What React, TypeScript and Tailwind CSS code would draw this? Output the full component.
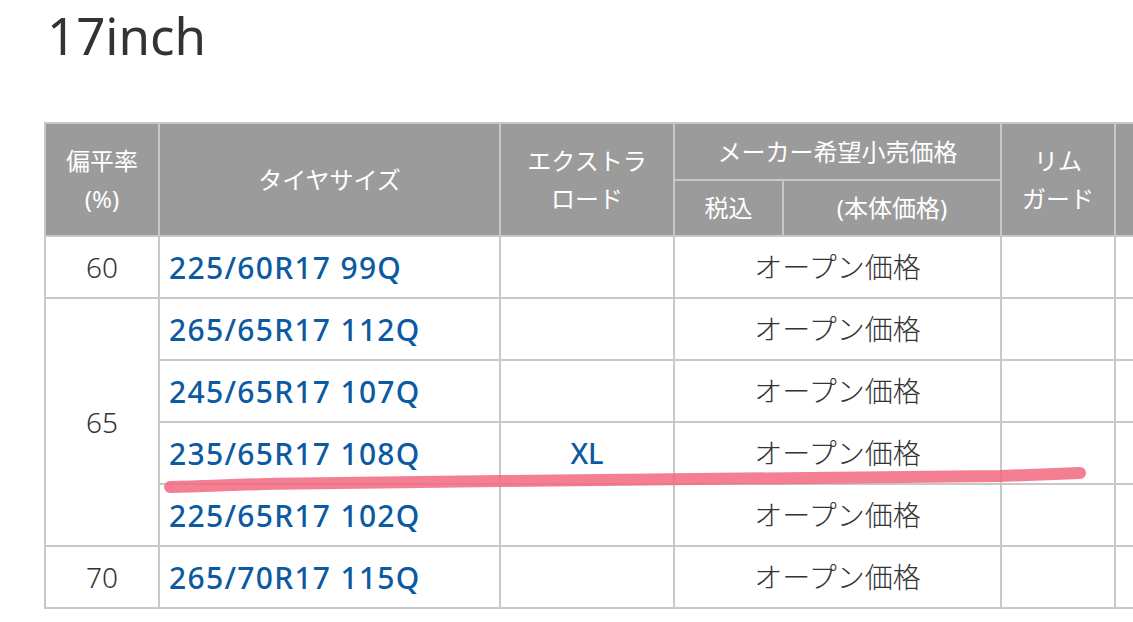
import React from 'react';

const sans = 'font-["Noto_Sans","Noto_Sans_CJK_JP",sans-serif]';

type Row = { size: string; xl?: boolean };

const groups: { ratio: string; rows: Row[] }[] = [
  { ratio: '60', rows: [{ size: '225/60R17 99Q' }] },
  {
    ratio: '65',
    rows: [
      { size: '265/65R17 112Q' },
      { size: '245/65R17 107Q' },
      { size: '235/65R17 108Q', xl: true },
      { size: '225/65R17 102Q' },
    ],
  },
  { ratio: '70', rows: [{ size: '265/70R17 115Q' }] },
];

const cell = 'border-2 border-[#c8c8c8]';
const th = `${cell} bg-[#9b9b9b] text-white font-normal text-[24px] leading-[38px] text-center align-middle`;

export default function App() {
  return (
    <main className={`relative min-h-[622px] w-[1133px] overflow-hidden bg-white ${sans}`}>
      <h1 className='pl-[47px] text-[51px] leading-[70px] font-normal text-[#333]'>17inch</h1>

      <div className='mt-[52px] pl-[44px]'>
        <table className='table-fixed border-collapse w-[1184px]'>
          <colgroup>
            <col className='w-[114px]' />
            <col className='w-[341px]' />
            <col className='w-[174px]' />
            <col className='w-[109px]' />
            <col className='w-[218px]' />
            <col className='w-[114px]' />
            <col className='w-[114px]' />
          </colgroup>
          <thead>
            <tr className='h-[57px]'>
              <th rowSpan={2} className={th}>
                偏平率
                <br />
                (%)
              </th>
              <th rowSpan={2} className={th}>タイヤサイズ</th>
              <th rowSpan={2} className={th}>
                エクストラ
                <br />
                ロード
              </th>
              <th colSpan={2} className={th}>メーカー希望小売価格</th>
              <th rowSpan={2} className={th}>
                リム
                <br />
                ガード
              </th>
              <th rowSpan={2} className={th}></th>
            </tr>
            <tr className='h-[56px]'>
              <th className={th}>税込</th>
              <th className={th}>(本体価格)</th>
            </tr>
          </thead>
          <tbody>
            {groups.map((g) =>
              g.rows.map((r, i) => (
                <tr key={r.size} className='h-[62px]'>
                  {i === 0 && (
                    <td rowSpan={g.rows.length} className={`${cell} text-center text-[28px] font-light text-[#333]`}>
                      {g.ratio}
                    </td>
                  )}
                  <td className={`${cell} pl-[9px] text-[30px] tracking-[1.3px] font-medium text-[#0b5aa2]`}>
                    {r.size}
                  </td>
                  <td className={`${cell} text-center text-[29px] font-medium text-[#0b5aa2]`}>
                    {r.xl ? 'XL' : ''}
                  </td>
                  <td colSpan={2} className={`${cell} text-center text-[28px] font-light text-[#333]`}>
                    オープン価格
                  </td>
                  <td className={cell}></td>
                  <td className={cell}></td>
                </tr>
              ))
            )}
          </tbody>
        </table>
      </div>

      {/* highlighter stroke over the 235/65R17 row */}
      <svg className='pointer-events-none absolute left-0 top-0' width='1133' height='622'>
        <path
          d='M170 487 C 210 486.5, 240 484, 300 483.5 L 500 481 L 1000 476 L 1080 473'
          fill='none'
          stroke='#f2687f'
          strokeOpacity='0.85'
          strokeWidth='12'
          strokeLinecap='round'
        />
      </svg>
    </main>
  );
}
